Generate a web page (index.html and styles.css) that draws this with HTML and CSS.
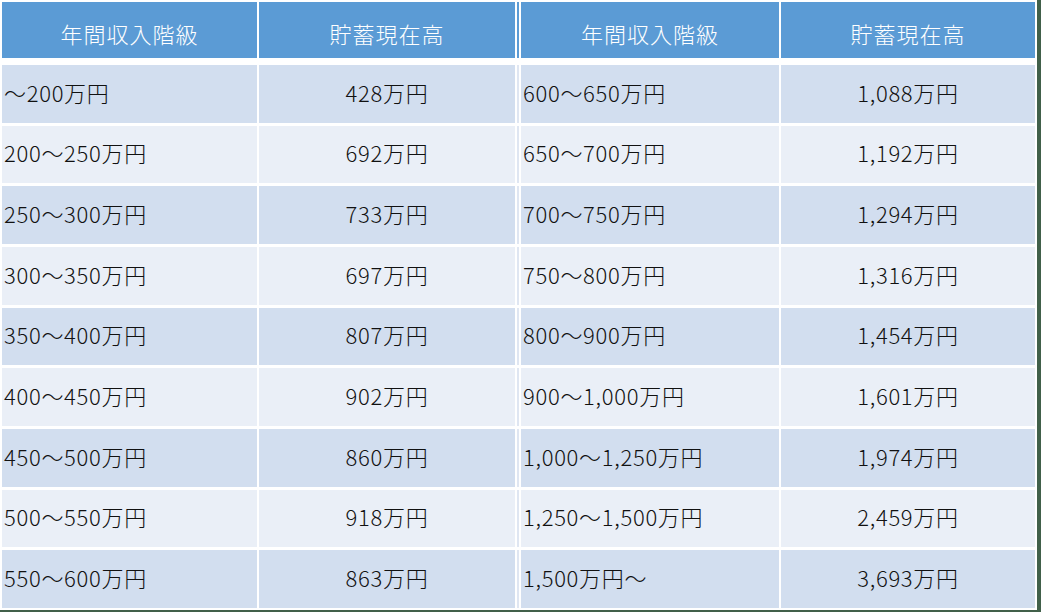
FILE: index.html
```html
<!DOCTYPE html>
<html lang="ja">
<head>
<meta charset="utf-8">
<title>年間収入階級別 貯蓄現在高</title>
<link rel="stylesheet" href="styles.css">
</head>
<body>
<div class="frame">
  <div class="grid">
    <div class="cell head">年間収入階級</div>
    <div class="cell head">貯蓄現在高</div>
    <div class="strip head"></div>
    <div class="cell head">年間収入階級</div>
    <div class="cell head">貯蓄現在高</div>

    <div class="cell odd left">～200万円</div>
    <div class="cell odd">428万円</div>
    <div class="strip odd"></div>
    <div class="cell odd left">600～650万円</div>
    <div class="cell odd">1,088万円</div>

    <div class="cell even left">200～250万円</div>
    <div class="cell even">692万円</div>
    <div class="strip even"></div>
    <div class="cell even left">650～700万円</div>
    <div class="cell even">1,192万円</div>

    <div class="cell odd left">250～300万円</div>
    <div class="cell odd">733万円</div>
    <div class="strip odd"></div>
    <div class="cell odd left">700～750万円</div>
    <div class="cell odd">1,294万円</div>

    <div class="cell even left">300～350万円</div>
    <div class="cell even">697万円</div>
    <div class="strip even"></div>
    <div class="cell even left">750～800万円</div>
    <div class="cell even">1,316万円</div>

    <div class="cell odd left">350～400万円</div>
    <div class="cell odd">807万円</div>
    <div class="strip odd"></div>
    <div class="cell odd left">800～900万円</div>
    <div class="cell odd">1,454万円</div>

    <div class="cell even left">400～450万円</div>
    <div class="cell even">902万円</div>
    <div class="strip even"></div>
    <div class="cell even left">900～1,000万円</div>
    <div class="cell even">1,601万円</div>

    <div class="cell odd left">450～500万円</div>
    <div class="cell odd">860万円</div>
    <div class="strip odd"></div>
    <div class="cell odd left">1,000～1,250万円</div>
    <div class="cell odd">1,974万円</div>

    <div class="cell even left">500～550万円</div>
    <div class="cell even">918万円</div>
    <div class="strip even"></div>
    <div class="cell even left">1,250～1,500万円</div>
    <div class="cell even">2,459万円</div>

    <div class="cell odd left">550～600万円</div>
    <div class="cell odd">863万円</div>
    <div class="strip odd"></div>
    <div class="cell odd left">1,500万円～</div>
    <div class="cell odd">3,693万円</div>
  </div>
</div>
</body>
</html>
```
FILE: styles.css
```css
html, body {
  margin: 0;
  padding: 0;
}
body {
  background: #41604a;
  width: 1041px;
  height: 612px;
  overflow: hidden;
  font-family: "Noto Sans CJK JP", "Noto Sans", sans-serif;
}
.frame {
  width: 1037px;
  height: 610px;
  box-sizing: border-box;
  padding: 2px;
  background: #ffffff;
}
.grid {
  display: grid;
  height: 606px;
  grid-template-columns: 255px 256px 2px 258px 254px;
  grid-template-rows: 60px repeat(9, 1fr);
  column-gap: 2px;
  row-gap: 3px;
}
.cell {
  display: flex;
  align-items: center;
  justify-content: center;
  font-size: 22px;
  font-weight: 300;
  color: #111111;
  white-space: nowrap;
  letter-spacing: 0.7px;
  padding-bottom: 4px;
  box-sizing: border-box;
}
.head {
  background: #5b9bd5;
  color: #ffffff;
  margin-bottom: 4px;
}
.cell.head {
  font-size: 22px;
  letter-spacing: 1px;
  padding-top: 5px;
  padding-bottom: 0;
}
.left {
  justify-content: flex-start;
  padding-left: 2px;
}
.odd {
  background: #d2deef;
}
.even {
  background: #eaeff7;
}
.strip.odd, .strip.even {
  background: #dfe6f2;
}
```
